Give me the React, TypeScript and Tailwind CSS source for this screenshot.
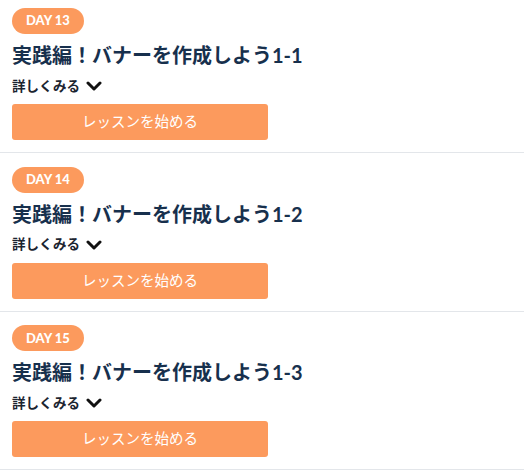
const lessons = [
  { day: 13, title: "実践編！バナーを作成しよう1-1" },
  { day: 14, title: "実践編！バナーを作成しよう1-2" },
  { day: 15, title: "実践編！バナーを作成しよう1-3" },
];

function ChevronDown() {
  return (
    <svg width="16" height="10" viewBox="0 0 16 10" fill="none" className="ml-[6px]">
      <path d="M2 2 L8 8 L14 2" stroke="#111" strokeWidth="3" strokeLinecap="round" strokeLinejoin="round" />
    </svg>
  );
}

export default function App() {
  return (
    <div
      className="min-h-screen bg-white overflow-hidden"
      style={{ fontFamily: 'Lato, "Noto Sans CJK JP", "Noto Sans", sans-serif' }}
    >
      <div className="-mt-[6px]">
        {lessons.map((l) => (
          <div key={l.day} className="px-3 pt-[13px] pb-3 border-b border-[#e3e6ea]">
            <div className="inline-flex items-center h-[26px] px-[14px] rounded-full bg-[#fc9a5d] text-white text-[13px] font-black">
              DAY {l.day}
            </div>
            <h2 className="mt-[7px] text-[20px] leading-[28px] font-bold text-[#17304d]">
              {l.title}
            </h2>
            <button className="mt-[7px] flex items-center h-[20px] text-[13.5px] font-bold text-[#1b2430]">
              詳しくみる
              <ChevronDown />
            </button>
            <button className="mt-[8px] w-[256px] h-[36px] rounded-[3px] bg-[#fc9a5d] text-white text-[14.5px] flex items-center justify-center">
              レッスンを始める
            </button>
          </div>
        ))}
      </div>
    </div>
  );
}
